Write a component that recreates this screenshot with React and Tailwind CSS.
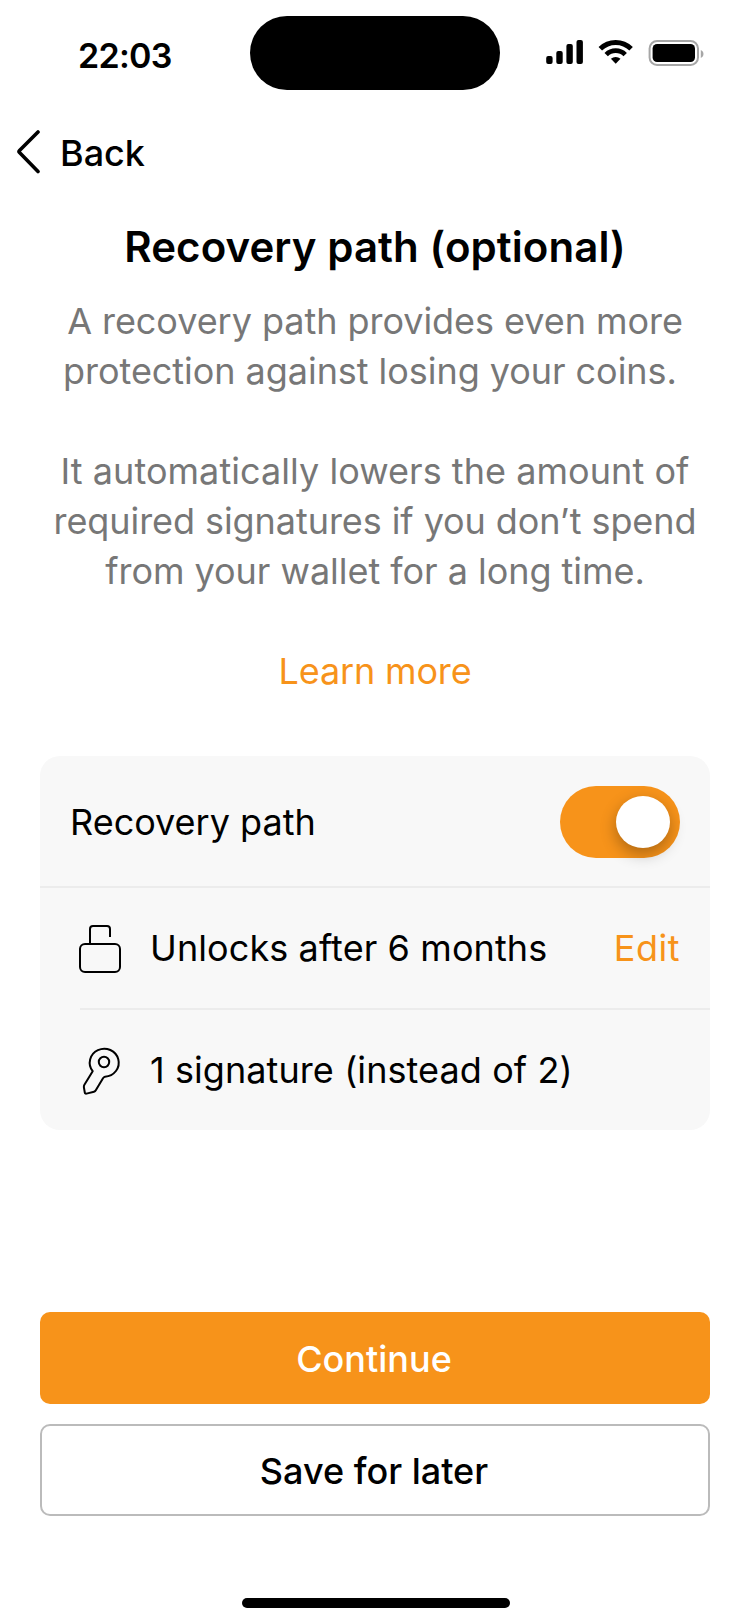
import React from "react";

function StatusBar() {
  return (
    <div className="flex h-[90px] items-start">
      <div className="w-[250px] pt-[33px] pl-[78px] text-[34px] leading-[46px] font-semibold tracking-[-0.7px]">22:03</div>
      <div className="mt-4 h-[74px] w-[250px] rounded-full bg-black" />
      <svg className="mt-9 ml-[44px]" width="164" height="34" viewBox="544 36 164 34" fill="none">
        <g fill="#000">
          <rect x="546.2" y="56" width="6.4" height="8" rx="2" />
          <rect x="556.3" y="51" width="6.4" height="13" rx="2" />
          <rect x="566.4" y="44" width="6.4" height="20" rx="2" />
          <rect x="576.5" y="40" width="6.4" height="24" rx="2" />
        </g>
        <path d="M600.3 48.7A22 22 0 0 1 631.1 48.7" stroke="#000" strokeWidth="5" />
        <path d="M606.2 54.6A13.5 13.5 0 0 1 625.2 54.6" stroke="#000" strokeWidth="4.8" />
        <path d="M615.7 63.7L610.9 58.8A7.2 7.2 0 0 1 620.5 58.8Z" fill="#000" />
        <rect x="649.6" y="41" width="48.4" height="24" rx="7.5" stroke="#a6a6a6" strokeWidth="2" />
        <rect x="652.6" y="44" width="42.4" height="18" rx="4.5" fill="#000" />
        <path d="M700.8 50v8c1.6-.7 2.7-2.2 2.7-4s-1.100-3.300-2.700-4Z" fill="#a6a6a6" />
      </svg>
    </div>
  );
}

function LockIcon() {
  return (
    <svg className="shrink-0" width="60" height="60" viewBox="70 918 60 60" fill="none" stroke="#000" strokeWidth="2">
      <rect x="80" y="944" width="40" height="28" rx="5" />
      <path d="M90 944V929a3 3 0 0 1 3-3H107a3 3 0 0 1 3 3V937" />
    </svg>
  );
}

function KeyIcon() {
  return (
    <svg className="shrink-0" width="60" height="60" viewBox="70 1040 60 60" fill="none" stroke="#000" strokeWidth="2" strokeLinejoin="round">
      <path d="M92.700 1071.200A14.500 14 0 1 1 105 1076.700Q103.800 1076.900 103 1078.200L95.800 1090.300Q95.200 1091.400 94 1091.700L86.500 1093.600Q85 1093.900 84.800 1092.500L83.900 1087.300Q83.700 1085.900 84.400 1084.800Z" />
      <circle cx="104" cy="1062" r="5.200" />
    </svg>
  );
}

export default function App() {
  return (
    <div className="flex h-[1624px] w-[750px] flex-col bg-white font-['Inter',sans-serif] text-[36px] leading-[50px] text-black">
      <StatusBar />
      <div className="mt-9 flex h-[52px] items-center pl-4">
        <svg className="shrink-0" width="24" height="46" viewBox="16 129 24 46" fill="none" stroke="#000" strokeWidth="3.6" strokeLinecap="round" strokeLinejoin="round">
          <path d="M38 132L19.500 150.500Q18.500 151.500 19.500 152.500L38 171.500" />
        </svg>
        <span className="ml-5 pt-[2px] font-medium">Back</span>
      </div>
      <main className="mt-[43px] px-10">
        <h1 className="text-center text-[42px] leading-[52px] font-semibold tracking-[0.07px]">Recovery path (optional)</h1>
        <div className="mt-[23px] text-center whitespace-pre text-[#777777]">
          <p className="tracking-[-0.05px]">{"A recovery path provides even more\nprotection against losing your coins. "}</p>
          <p className="mt-[50px]">
            <span className="block tracking-[0.05px]">It automatically lowers the amount of</span>
            <span className="block tracking-[-0.07px]">required signatures if you don’t spend</span>
            <span className="block tracking-[-0.03px]">from your wallet for a long time.</span>
          </p>
          <a className="mt-[50px] block tracking-[-0.15px] text-[#f7931a]">Learn more</a>
        </div>
        <section className="mt-[60px] rounded-[20px] bg-[#f8f8f8]">
          <div className="flex h-[130px] items-center justify-between px-[30px] pt-[2px]">
            <span>Recovery path</span>
            <div className="flex h-[72px] w-[120px] items-center justify-end rounded-full bg-[#f7931a] pr-[10px]">
              <div className="h-[52px] w-[54px] rounded-[50%] bg-white shadow-[0_6px_16px_rgba(0,0,0,0.3)]" />
            </div>
          </div>
          <div className="flex h-[122px] items-center border-t-2 border-[#ececec] pr-[30px] pl-[30px]">
            <LockIcon />
            <span className="ml-5 flex-1 tracking-[0.1px]">Unlocks after 6 months</span>
            <span className="tracking-[0.5px] text-[#f7931a]">Edit</span>
          </div>
          <div className="ml-10 h-[2px] bg-[#ececec]" />
          <div className="flex h-[120px] items-center px-[30px]">
            <KeyIcon />
            <span className="ml-5 tracking-[0.08px]">1 signature (instead of 2)</span>
          </div>
        </section>
      </main>
      <footer className="mt-auto flex flex-col items-center px-10 pb-4 font-medium">
        <button className="h-[92px] w-full rounded-[10px] bg-[#f7931a] pt-[2px] pr-[2px] text-white">Continue</button>
        <button className="mt-5 h-[92px] w-full rounded-[10px] border-2 border-[#bbbbbb] bg-white pt-[2px] pr-[2px]">Save for later</button>
        <div className="mt-[82px] ml-[2px] h-[10px] w-[268px] rounded-full bg-black" />
      </footer>
    </div>
  );
}
